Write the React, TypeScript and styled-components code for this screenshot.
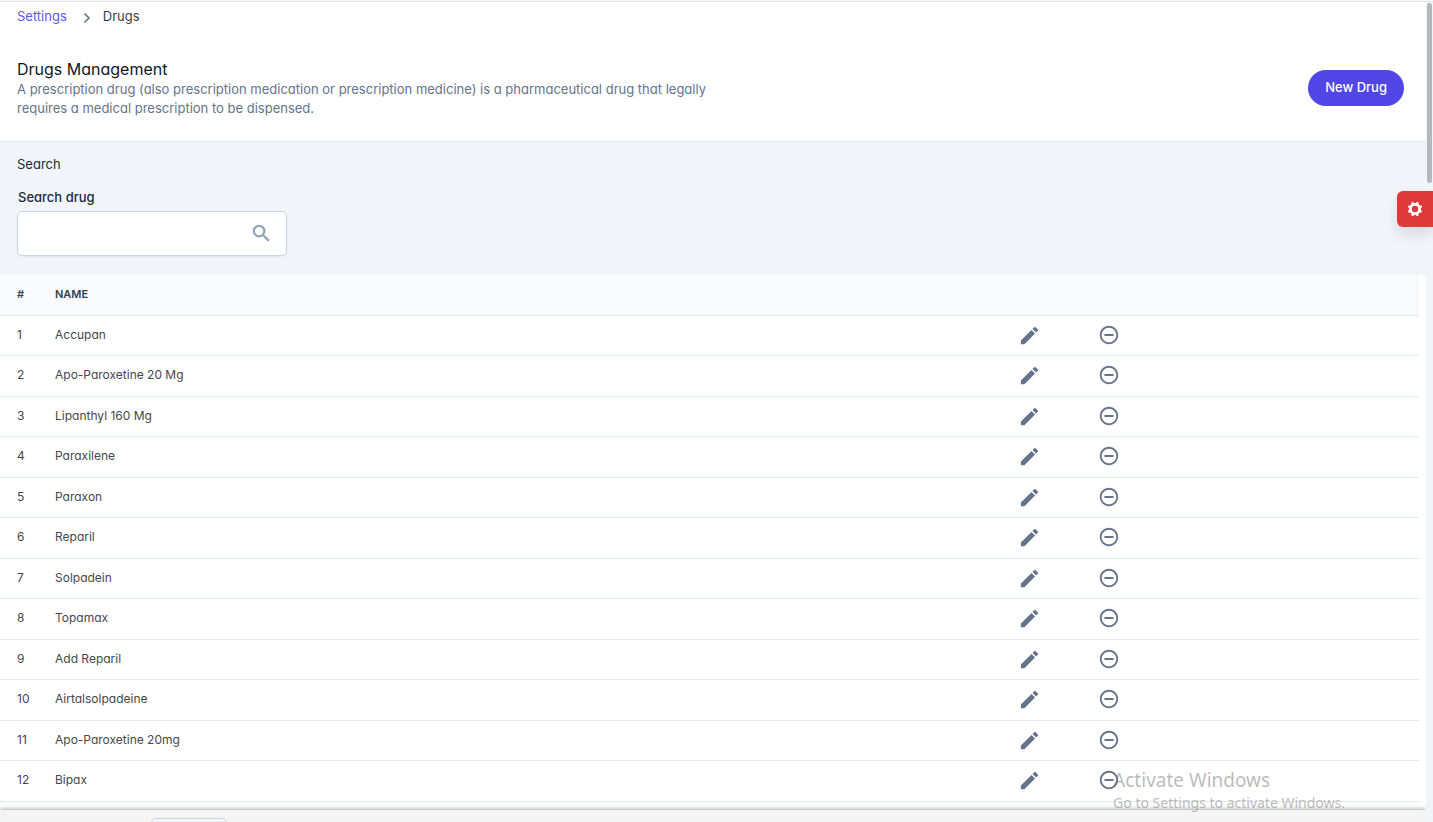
import React from 'react';
import styled, { createGlobalStyle } from 'styled-components';
import { MdEdit, MdRemoveCircleOutline } from 'react-icons/md';

const GlobalStyle = createGlobalStyle`
  *, *::before, *::after { box-sizing: border-box; }
  body {
    margin: 0;
    background: #f1f5f9;
    font-family: Inter, "Liberation Sans", sans-serif;
    font-feature-settings: "cv11";
    font-size: 13px;
    line-height: 20px;
  }
  button, input, select { font: inherit; font-feature-settings: inherit; }
`;

const Screen = styled.div`
  position: relative;
  display: flex;
  height: 100vh;
  overflow: hidden;
  border-top: 1px solid #f8fafb;
`;

const Page = styled.main`
  flex: 1;
  min-width: 0;
  display: flex;
  flex-direction: column;
  background: #fff;
  border-top: 1px solid #e2e4e6;
`;

const ScrollRail = styled.div`
  flex: none;
  width: 7px;
  padding: 1px 1px 0;
  background: #f1f5f9;
  border-top: 1px solid #e2e4e6;
`;

const ScrollThumb = styled.div`
  height: 22%;
  border-radius: 3px;
  background: #b4b8bb;
`;

const Breadcrumb = styled.nav`
  display: flex;
  align-items: flex-start;
  padding: 6px 17px 0;
  line-height: 16px;
  color: #334155;
`;

const CrumbLink = styled.a`
  color: #6056f0;
  text-decoration: none;
`;

const CrumbIcon = styled.svg`
  width: 20px;
  height: 20px;
  margin: 0 6px 0 10px;
  color: #64748b;
`;

const Header = styled.header`
  display: flex;
  align-items: center;
  justify-content: space-between;
  gap: 24px;
  padding: 31px 22px 23px 17px;
  border-bottom: 1px solid #e2e8f0;
`;

const Intro = styled.div`
  max-width: 690px;
`;

const Title = styled.h1`
  margin: 0;
  font-size: 16px;
  line-height: 21px;
  font-weight: 400;
  color: #0f172a;
`;

const Description = styled.p`
  margin: 0;
  line-height: 19px;
  color: #64748b;
`;

const PrimaryButton = styled.button`
  flex: none;
  height: 36px;
  margin-bottom: 2px;
  padding: 0 17px 2px;
  border: 0;
  border-radius: 18px;
  background: #4f46e5;
  color: #fff;
  font-weight: 500;
`;

const SearchPanel = styled.section`
  display: flex;
  flex-direction: column;
  align-items: flex-start;
  padding: 12px 17px 19px;
  background: #f1f5f9;
`;

const PanelTitle = styled.h2`
  margin: 0 0 13px;
  font-size: 13px;
  font-weight: 400;
  color: #1e293b;
`;

const FieldLabel = styled.label`
  margin-bottom: 4px;
  padding-left: 1px;
  font-weight: 500;
  color: #1e293b;
`;

const SearchField = styled.div`
  display: flex;
  align-items: center;
  width: 270px;
  height: 45px;
  padding: 0 13px 1px;
  border: 1px solid #cbd5e1;
  border-radius: 5px;
  background: #fff;
  box-shadow: 0 1px 2px rgba(15, 23, 42, 0.06);
  color: #94a3b8;
`;

const SearchInput = styled.input`
  flex: 1;
  min-width: 0;
  border: 0;
  outline: 0;
  background: transparent;
  color: #1e293b;
`;

const TableArea = styled.section`
  flex: 1;
  min-height: 0;
  overflow: hidden;
  padding-right: 7px;
`;

const DrugTable = styled.table`
  width: 100%;
  table-layout: fixed;
  border-collapse: separate;
  border-spacing: 0;
`;

const IndexCol = styled.col`
  width: 38px;
`;
const ActionCol = styled.col`
  width: 80px;
`;
const RestCol = styled.col`
  width: 19%;
`;

const HeadCell = styled.th`
  height: 41px;
  padding: 0 0 2px 17px;
  border-bottom: 1px solid #e2e8f0;
  background: #f8fafc;
  color: #334155;
  font-size: 11px;
  font-weight: 600;
  text-align: left;
`;

const Row = styled.tr`
  height: 40px;
  &:nth-child(even) { height: 41px; }
`;

const Cell = styled.td`
  padding: 9px 0 0 17px;
  border-bottom: 1px solid #e2e8f0;
  color: #45474c;
  font-size: 12px;
  vertical-align: top;
`;

const ActionCell = styled(Cell)`
  padding: 8px 0 0;
`;

const IconButton = styled.button`
  display: flex;
  align-items: center;
  height: 22px;
  margin: 0 auto;
  padding: 0;
  border: 0;
  background: none;
  color: #64748b;
`;

const Pager = styled.footer`
  flex: none;
  height: 12px;
  padding: 8px 151px 0;
  overflow: hidden;
  background: #f4f4f4;
  box-shadow: 0 -1px 4px rgba(0, 0, 0, 0.35);
`;

const PageSize = styled.select`
  display: block;
  width: 76px;
  height: 32px;
  border: 1px solid #cbd5e1;
  border-radius: 5px;
  appearance: none;
  background: #f1f5f9;
`;

const SettingsTab = styled.button`
  position: absolute;
  top: 190px;
  right: 0;
  display: flex;
  align-items: center;
  justify-content: center;
  width: 36px;
  height: 36px;
  padding: 0;
  border: 0;
  border-radius: 6px 0 0 6px;
  background: #df3a3a;
  color: #fff;
  box-shadow: 0 8px 14px rgba(0, 0, 0, 0.1);
`;

const Watermark = styled.aside`
  position: absolute;
  right: 88px;
  bottom: 9px;
  color: rgba(120, 120, 120, 0.5);
  font-family: "Noto Sans", "Open Sans", sans-serif;
  font-size: 14px;
  pointer-events: none;
`;

const WatermarkTitle = styled.div`
  font-size: 19px;
  line-height: 26px;
`;

const ChevronIcon = () => (
  <CrumbIcon viewBox="0 0 20 20" fill="none" stroke="currentColor" aria-hidden="true">
    <path d="M8 6l4 4-4 4" strokeWidth="1.7" strokeLinecap="round" strokeLinejoin="round" />
  </CrumbIcon>
);

const SearchIcon = () => (
  <svg width="23" height="23" viewBox="0 0 24 24" fill="none" stroke="currentColor" aria-hidden="true">
    <circle cx="9.5" cy="9.5" r="5.5" strokeWidth="2.3" />
    <path d="M13.5 13.5L19.7 19.7" strokeWidth="2.3" />
  </svg>
);

const toothAngles = [0, 45, 90, 135, 180, 225, 270, 315];

const CogIcon = () => (
  <svg width="18" height="18" viewBox="-9 -9 18 18" fill="none" stroke="currentColor" aria-hidden="true">
    <circle r="4.6" strokeWidth="2.8" />
    {toothAngles.map((angle) => (
      <path
        key={angle}
        d="M0-5V-6.2"
        strokeWidth="2.6"
        strokeLinecap="round"
        transform={`rotate(${angle + 22.5})`}
      />
    ))}
  </svg>
);

const drugs = [
  'Accupan',
  'Apo-Paroxetine 20 Mg',
  'Lipanthyl 160 Mg',
  'Paraxilene',
  'Paraxon',
  'Reparil',
  'Solpadein',
  'Topamax',
  'Add Reparil',
  'Airtalsolpadeine',
  'Apo-Paroxetine 20mg',
  'Bipax',
];

export default function App() {
  return (
    <Screen>
      <GlobalStyle />
      <Page>
        <Breadcrumb aria-label="Breadcrumb">
          <CrumbLink href="#settings">Settings</CrumbLink>
          <ChevronIcon />
          <span>Drugs</span>
        </Breadcrumb>
        <Header>
          <Intro>
            <Title>Drugs Management</Title>
            <Description>
              A prescription drug (also prescription medication or prescription medicine) is a
              pharmaceutical drug that legally requires a medical prescription to be dispensed.
            </Description>
          </Intro>
          <PrimaryButton type="button">New Drug</PrimaryButton>
        </Header>
        <SearchPanel>
          <PanelTitle>Search</PanelTitle>
          <FieldLabel htmlFor="drug-search">Search drug</FieldLabel>
          <SearchField>
            <SearchInput id="drug-search" type="text" />
            <SearchIcon />
          </SearchField>
        </SearchPanel>
        <TableArea>
          <DrugTable>
            <colgroup>
              <IndexCol />
              <col />
              <ActionCol />
              <ActionCol />
              <RestCol />
            </colgroup>
            <thead>
              <tr>
                <HeadCell scope="col">#</HeadCell>
                <HeadCell scope="col">NAME</HeadCell>
                <HeadCell />
                <HeadCell />
                <HeadCell />
              </tr>
            </thead>
            <tbody>
              {drugs.map((name, i) => (
                <Row key={name}>
                  <Cell>{i + 1}</Cell>
                  <Cell>{name}</Cell>
                  <ActionCell>
                    <IconButton type="button" aria-label={`Edit ${name}`}>
                      <MdEdit size={23} />
                    </IconButton>
                  </ActionCell>
                  <ActionCell>
                    <IconButton type="button" aria-label={`Remove ${name}`}>
                      <MdRemoveCircleOutline size={22} />
                    </IconButton>
                  </ActionCell>
                  <Cell />
                </Row>
              ))}
            </tbody>
          </DrugTable>
        </TableArea>
        <Pager>
          <PageSize aria-label="Rows per page" />
        </Pager>
      </Page>
      <ScrollRail>
        <ScrollThumb />
      </ScrollRail>
      <SettingsTab type="button" aria-label="Open settings">
        <CogIcon />
      </SettingsTab>
      <Watermark>
        <WatermarkTitle>Activate Windows</WatermarkTitle>
        Go to Settings to activate Windows.
      </Watermark>
    </Screen>
  );
}
